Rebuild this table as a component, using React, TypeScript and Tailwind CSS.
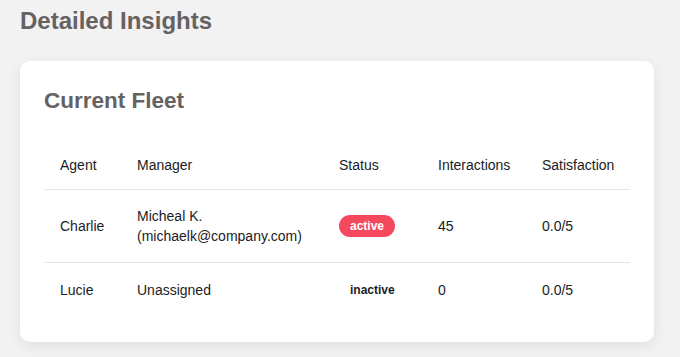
const rows = [
  {
    agent: 'Charlie',
    manager: ['Micheal K.', '(michaelk@company.com)'],
    status: 'active',
    interactions: '45',
    satisfaction: '0.0/5',
  },
  {
    agent: 'Lucie',
    manager: ['Unassigned'],
    status: 'inactive',
    interactions: '0',
    satisfaction: '0.0/5',
  },
]

export default function App() {
  return (
    <div className="min-h-screen w-[680px] bg-[#f2f2f2] px-5 pt-[5px] font-['Liberation_Sans',Arial,sans-serif]">
      <h1 className="text-2xl leading-8 font-bold text-[#666262]">Detailed Insights</h1>

      <div className="mt-6 w-[634px] rounded-[10px] bg-white px-6 pt-6 pb-[25px] shadow-[0_4px_14px_rgba(0,0,0,0.08)]">
        <h2 className="mb-6 text-[22.5px] leading-8 font-bold text-[#666262]">Current Fleet</h2>

        <table className="w-[586px] table-fixed border-collapse text-sm text-[#1c1c24]">
          <colgroup>
            <col className="w-[77px]" />
            <col className="w-[202px]" />
            <col className="w-[99px]" />
            <col className="w-[104px]" />
            <col />
          </colgroup>
          <thead>
            <tr className="border-b border-[#e3e8ef]">
              <th className="pl-4 pr-3.5 py-3.5 text-left leading-5 font-normal">Agent</th>
              <th className="pl-4 pr-3.5 py-3.5 text-left leading-5 font-normal">Manager</th>
              <th className="pl-4 pr-3.5 py-3.5 text-left leading-5 font-normal">Status</th>
              <th className="pl-4 pr-3.5 py-3.5 text-left leading-5 font-normal">Interactions</th>
              <th className="pl-4 pr-3.5 py-3.5 text-left leading-5 font-normal">Satisfaction</th>
            </tr>
          </thead>
          <tbody>
            {rows.map((r, i) => (
              <tr key={r.agent} className={i < rows.length - 1 ? 'border-b border-[#e3e8ef]' : ''}>
                <td className="pl-4 pr-3.5 py-4 leading-5">{r.agent}</td>
                <td className="pl-4 pr-3.5 py-4 leading-5">
                  {r.manager.map(line => (
                    <div key={line}>{line}</div>
                  ))}
                </td>
                <td className="pl-4 pr-3.5 py-4 leading-5">
                  {r.status === 'active' ? (
                    <span className="inline-block rounded-full bg-[#f4495c] px-[11px] text-xs leading-[22px] font-bold text-white">
                      active
                    </span>
                  ) : (
                    <span className="inline-block rounded-full px-[11px] text-xs leading-[22px] font-bold text-[#1c1c24]">
                      inactive
                    </span>
                  )}
                </td>
                <td className="pl-4 pr-3.5 py-4 leading-5">{r.interactions}</td>
                <td className="pl-4 pr-3.5 py-4 leading-5">{r.satisfaction}</td>
              </tr>
            ))}
          </tbody>
        </table>
      </div>
    </div>
  )
}
